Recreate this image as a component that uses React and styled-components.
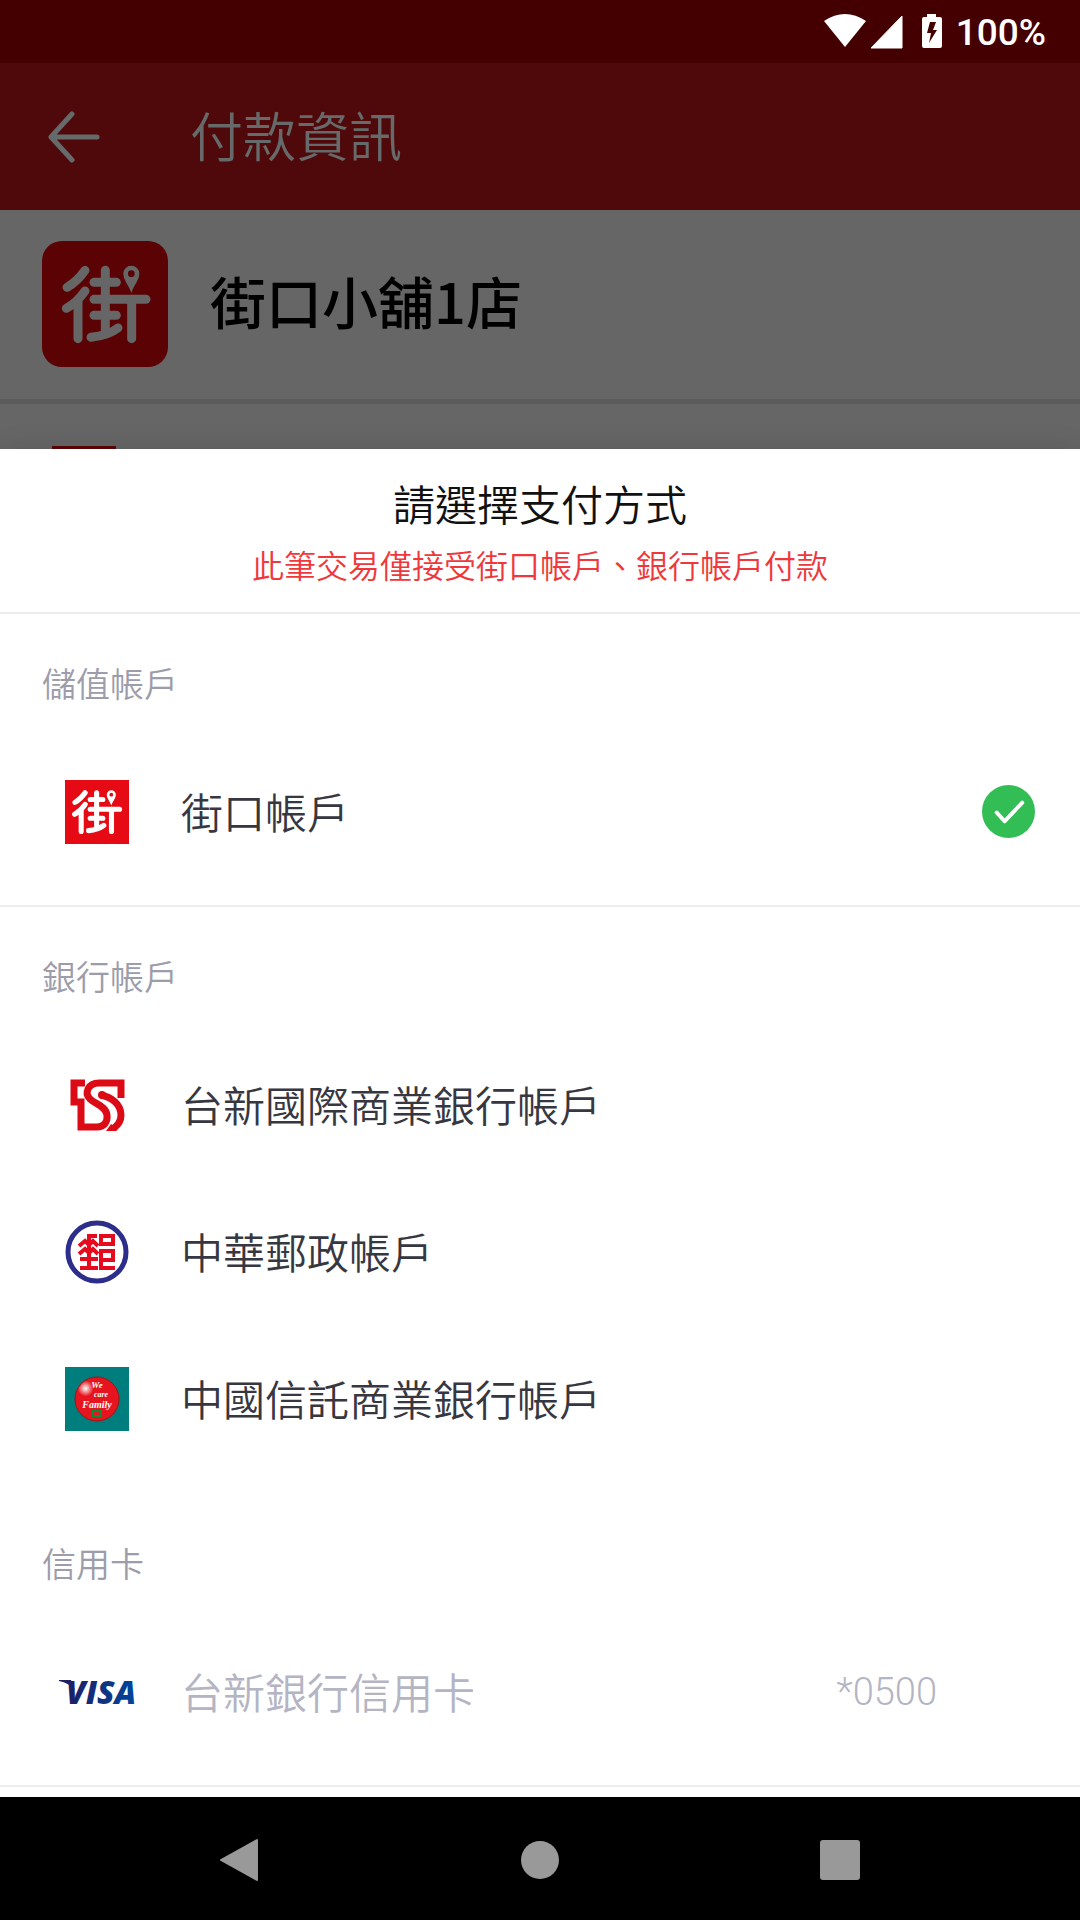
import React, { useState } from 'react';
import styled, { createGlobalStyle } from 'styled-components';

const GlobalStyle = createGlobalStyle`
  * {
    box-sizing: border-box;
  }

  body {
    margin: 0;
    background: #000;
    font-family: 'Noto Sans CJK TC', 'Noto Sans', sans-serif;
    font-weight: 350;
  }
`;

const Page = styled.div`
  min-height: 100vh;
  display: flex;
  flex-direction: column;
  background: #666;
`;

const StatusBar = styled.div`
  height: 63px;
  padding: 2px 34px 0 0;
  display: flex;
  align-items: center;
  justify-content: flex-end;
  background: #440000;
  color: #fff;
  font-family: Roboto, sans-serif;
  font-size: 37px;
  font-weight: 500;
  line-height: 44px;
`;

const StatusIcons = styled.svg`
  width: 120px;
  height: 36px;
  margin: 0 12px 4px 0;
`;

const AppBar = styled.header`
  height: 147px;
  padding: 0 48px;
  display: flex;
  align-items: center;
  gap: 90px;
  background: #4f090b;
  color: #666a6a;
`;

const BackButton = styled.button`
  width: 52px;
  height: 52px;
  padding: 0;
  border: none;
  background: none;
  color: inherit;
  cursor: pointer;

  svg {
    display: block;
  }
`;

const AppTitle = styled.h1`
  margin: 0;
  padding-bottom: 6px;
  font-size: 53px;
  font-weight: 350;
  line-height: 76px;
`;

const StoreRow = styled.div`
  padding: 31px 42px 32px;
  display: flex;
  align-items: center;
  gap: 42px;
  border-bottom: 5px solid #5b5b5b;
`;

const StoreLogo = styled.div`
  width: 126px;
  height: 126px;
  border-radius: 20px;
  overflow: hidden;
`;

const StoreName = styled.div`
  padding-bottom: 8px;
  color: #000;
  font-size: 56px;
  font-weight: 500;
  line-height: 80px;
`;

const CoveredRow = styled.div`
  height: 45px;
  padding: 42px 52px 0;
  overflow: hidden;
`;

const CoveredLogo = styled.div`
  width: 64px;
  height: 64px;
  background: #5b0205;
`;

const Sheet = styled.main`
  flex: 1;
  background: #fff;
  box-shadow: 0 -2px 24px rgba(0, 0, 0, 0.1);
`;

const SheetHeader = styled.div`
  padding: 24px 42px 23px;
  display: flex;
  flex-direction: column;
  align-items: center;
  gap: 6px;
  border-bottom: 2px solid #ececec;
`;

const SheetTitle = styled.h2`
  margin: 0;
  color: #111;
  font-size: 42px;
  font-weight: 350;
  line-height: 60px;
`;

const SheetNotice = styled.p`
  margin: 0;
  color: #f0373c;
  font-size: 32px;
  line-height: 50px;
`;

const Section = styled.fieldset`
  margin: 0;
  padding: 0 0 20px;
  border: none;
  border-bottom: 2px solid ${props => (props.$divided ? '#ececec' : 'transparent')};
`;

const SectionLabel = styled.legend`
  padding: 44px 42px 30px;
  color: #9c9caa;
  font-size: 34px;
  line-height: 50px;
`;

const Option = styled.label`
  height: 147px;
  padding: 0 45px 0 57px;
  display: flex;
  align-items: center;
  color: ${props => (props.$disabled ? '#b4b4c3' : '#373741')};
  font-size: 42px;
  line-height: 60px;
  cursor: ${props => (props.$disabled ? 'default' : 'pointer')};
`;

const OptionIcon = styled.span`
  width: 80px;
  margin-right: 44px;
  display: flex;
  justify-content: center;

  svg {
    display: block;
  }
`;

const OptionName = styled.span`
  flex: 1;
  padding-bottom: 2px;
`;

const CardDigits = styled.span`
  margin-right: 45px;
  font-family: Roboto, sans-serif;
  font-size: 38px;
  font-weight: 300;
`;

const RadioCell = styled.span`
  display: grid;
  width: 53px;
  height: 53px;

  > * {
    grid-area: 1 / 1;
  }
`;

const Radio = styled.input`
  appearance: none;
  width: 53px;
  height: 53px;
  margin: 0;
  border-radius: 50%;

  &:checked {
    background: #32be55;
  }
`;

const Tick = styled.svg`
  width: 53px;
  height: 53px;
  pointer-events: none;
`;

const NavBar = styled.nav`
  height: 123px;
  padding: 3px 90px 0;
  display: grid;
  grid-template-columns: repeat(3, 1fr);
  align-items: center;
  justify-items: center;
  background: #000;
`;

const NavButton = styled.button`
  width: 48px;
  height: 48px;
  padding: 0;
  border: none;
  background: none;
  cursor: pointer;

  svg {
    display: block;
  }
`;

const JkoLogo = ({ size, viewBox, bg, fg }) => (
  <svg width={size} height={size} viewBox={viewBox} aria-hidden="true">
    <rect width="400" height="400" fill={bg} />
    <g fill="none" stroke={fg} strokeWidth="27" strokeLinecap="round" strokeLinejoin="round">
      <path d="M135 91Q112 124 81 142" />
      <path d="M135 153Q112 187 79 205" />
      <path d="M114 180V296" />
      <path d="M196 91V275" />
      <path d="M162 127H229" />
      <path d="M162 178H318" />
      <path d="M162 226H229" />
      <path d="M153 292Q204 287 234 264" />
      <path d="M275 178V296" />
    </g>
    <path
      fill={fg}
      fillRule="evenodd"
      d="M274 159C268 138 250 120 250 101A24 24 0 0 1 298 101C298 120 280 138 274 159ZM274 91A10 10 0 1 0 274 111A10 10 0 1 0 274 91Z"
    />
  </svg>
);

const TaishinLogo = () => (
  <svg width="64" height="64" viewBox="0 0 64 64" aria-hidden="true">
    <g fill="none" stroke="#dc0a14" strokeWidth="7">
      <path d="M56 25V10H34C23 10 19 20 25 26C30 31 41 33 42 42C43 50 38 54 32 54H16V29H9V10H20" />
      <path d="M36 22C46 24 56 31 56 42C56 48 53 52 49 55" />
    </g>
    <circle cx="37" cy="22" r="4" fill="#dc0a14" />
    <path fill="#dc0a14" d="M46 51L53 56L51 58H41Z" />
  </svg>
);

const PostLogo = () => (
  <svg width="64" height="64" viewBox="0 0 64 64" aria-hidden="true">
    <circle cx="32" cy="32" r="29" fill="#fff" stroke="#2d2d8c" strokeWidth="5" />
    <g fill="none" stroke="#e60a1e" strokeWidth="4">
      <path d="M32 16H24V48" />
      <path d="M14 26L20 21L24 25L28 21L33 26" />
      <path d="M14 34L20 29L24 33L28 29L33 34" />
      <path d="M15 39H33M15 48H33" />
      <path d="M36 16H48V24H36ZM50 48H36V31H48V40H36" />
    </g>
  </svg>
);

const CtbcLogo = () => (
  <svg width="64" height="64" viewBox="0 0 64 64" aria-hidden="true">
    <defs>
      <radialGradient id="ctbc-shine" cx="0.24" cy="0.26" r="0.18">
        <stop offset="0" stopColor="#fff" />
        <stop offset="1" stopColor="#e6141e" />
      </radialGradient>
    </defs>
    <rect width="64" height="64" fill="#007d7d" />
    <circle cx="32" cy="32" r="22" fill="url(#ctbc-shine)" stroke="#a01414" />
    <g fill="#fff" fontFamily="Liberation Serif, serif" fontStyle="italic" fontWeight="700" textAnchor="middle">
      <text x="32" y="21" fontSize="9">We</text>
      <text x="36" y="30" fontSize="8">care</text>
      <text x="32" y="41" fontSize="10">Family</text>
    </g>
    <rect x="28" y="44" width="8" height="5" fill="none" stroke="#0a8c32" strokeWidth="2" />
  </svg>
);

const VisaLogo = () => (
  <svg width="80" height="48" viewBox="0 0 80 48" aria-hidden="true">
    <defs>
      <linearGradient id="visa-blue" x1="0" x2="1">
        <stop offset="0" stopColor="#1e1e64" />
        <stop offset="1" stopColor="#00469b" />
      </linearGradient>
    </defs>
    <path fill="#1e1e64" d="M2 12H14L18 22Q12 15 2 13Z" />
    <text
      x="9"
      y="36"
      fill="url(#visa-blue)"
      fontFamily="Open Sans, sans-serif"
      fontSize="32"
      fontStyle="italic"
      fontWeight="800"
    >
      VISA
    </text>
  </svg>
);

const SECTIONS = [
  {
    title: '儲值帳戶',
    divided: true,
    options: [
      { id: 'jko', name: '街口帳戶', icon: <JkoLogo size={64} viewBox="28 23 340 340" bg="#e60a14" fg="#fff" /> },
    ],
  },
  {
    title: '銀行帳戶',
    divided: false,
    options: [
      { id: 'taishin', name: '台新國際商業銀行帳戶', icon: <TaishinLogo /> },
      { id: 'post', name: '中華郵政帳戶', icon: <PostLogo /> },
      { id: 'ctbc', name: '中國信託商業銀行帳戶', icon: <CtbcLogo /> },
    ],
  },
  {
    title: '信用卡',
    divided: true,
    options: [
      { id: 'visa', name: '台新銀行信用卡', icon: <VisaLogo />, digits: '*0500', disabled: true },
    ],
  },
];

const App = () => {
  const [selected, setSelected] = useState('jko');

  return (
    <Page>
      <GlobalStyle />
      <StatusBar>
        <StatusIcons viewBox="0 0 120 36" fill="#fff" aria-hidden="true">
          <path d="M0 8Q21 -6 42 8L21 34Z" />
          <path d="M78 3V35H47Z" stroke="#fff" strokeLinejoin="round" />
          <path fillRule="evenodd" d="M103 1H112V4H116Q118 4 118 6V33Q118 35 116 35H100Q98 35 98 33V6Q98 4 100 4H103ZM106 9L103 20H107L105 30L113 17H109L112 9Z" />
        </StatusIcons>
        <span>100%</span>
      </StatusBar>

      <AppBar>
        <BackButton type="button" aria-label="返回">
          <svg width="52" height="52" viewBox="0 0 52 52" fill="none" stroke="currentColor" strokeWidth="5" strokeLinecap="round" strokeLinejoin="round">
            <path d="M24 3L3 26L24 49M3 26H49" />
          </svg>
        </BackButton>
        <AppTitle>付款資訊</AppTitle>
      </AppBar>

      <StoreRow>
        <StoreLogo>
          <JkoLogo size={126} viewBox="6 3 378 378" bg="#5b0205" fg="#666" />
        </StoreLogo>
        <StoreName>街口小舖1店</StoreName>
      </StoreRow>
      <CoveredRow>
        <CoveredLogo />
      </CoveredRow>

      <Sheet>
        <SheetHeader>
          <SheetTitle>請選擇支付方式</SheetTitle>
          <SheetNotice>此筆交易僅接受街口帳戶、銀行帳戶付款</SheetNotice>
        </SheetHeader>

        {SECTIONS.map(section => (
          <Section key={section.title} $divided={section.divided}>
            <SectionLabel>{section.title}</SectionLabel>
            {section.options.map(option => (
              <Option key={option.id} $disabled={option.disabled}>
                <OptionIcon>{option.icon}</OptionIcon>
                <OptionName>{option.name}</OptionName>
                {option.digits && <CardDigits>{option.digits}</CardDigits>}
                <RadioCell>
                  <Radio
                    type="radio"
                    name="payment"
                    value={option.id}
                    checked={selected === option.id}
                    disabled={option.disabled}
                    onChange={() => setSelected(option.id)}
                  />
                  {selected === option.id && (
                    <Tick viewBox="0 0 54 54" fill="none" stroke="#fff" strokeWidth="4" strokeLinecap="round" strokeLinejoin="round">
                      <path d="M15 28L23 37L41 18" />
                    </Tick>
                  )}
                </RadioCell>
              </Option>
            ))}
          </Section>
        ))}
      </Sheet>

      <NavBar>
        <NavButton type="button" aria-label="返回">
          <svg width="48" height="48" viewBox="0 0 48 48" fill="#999" stroke="#999" strokeWidth="2" strokeLinejoin="round">
            <path d="M41 4V44L5 24Z" />
          </svg>
        </NavButton>
        <NavButton type="button" aria-label="主畫面">
          <svg width="48" height="48" viewBox="0 0 48 48" fill="#999">
            <circle cx="24" cy="24" r="19" />
          </svg>
        </NavButton>
        <NavButton type="button" aria-label="最近使用">
          <svg width="48" height="48" viewBox="0 0 48 48" fill="#999">
            <rect x="4" y="4" width="40" height="40" rx="3" />
          </svg>
        </NavButton>
      </NavBar>
    </Page>
  );
};

export default App;
